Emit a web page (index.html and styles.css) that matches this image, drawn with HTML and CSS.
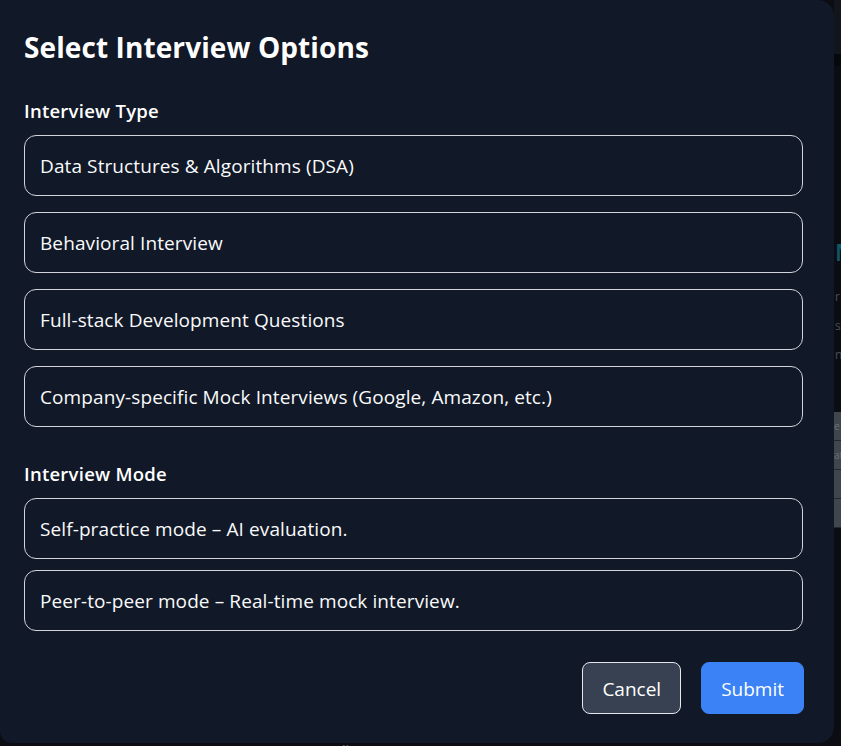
FILE: index.html
```html
<!DOCTYPE html>
<html lang="en">
<head>
<meta charset="utf-8">
<title>Select Interview Options</title>
<link rel="stylesheet" href="styles.css">
</head>
<body>
<div class="page">
  <div class="page-top"></div>
  <div class="page-body">
    <div class="page-heading">Mock</div>
    <p class="page-line">r</p>
    <p class="page-line">s</p>
    <p class="page-line">nc</p>
    <div class="page-table">
      <div class="page-row">e</div>
      <div class="page-row">ato</div>
      <div class="page-row"></div>
      <div class="page-row"></div>
    </div>
  </div>
  <div class="page-foot">View all interview options</div>
</div>

<div class="overlay">
  <div class="modal">
    <h2 class="modal-title">Select Interview Options</h2>

    <section class="group group-type">
      <h3 class="group-label">Interview Type</h3>
      <div class="options options-type">
        <button class="option">Data Structures &amp; Algorithms (DSA)</button>
        <button class="option">Behavioral Interview</button>
        <button class="option">Full-stack Development Questions</button>
        <button class="option">Company-specific Mock Interviews (Google, Amazon, etc.)</button>
      </div>
    </section>

    <section class="group group-mode">
      <h3 class="group-label">Interview Mode</h3>
      <div class="options options-mode">
        <button class="option">Self-practice mode – AI evaluation.</button>
        <button class="option">Peer-to-peer mode – Real-time mock interview.</button>
      </div>
    </section>

    <div class="actions">
      <button class="btn btn-cancel">Cancel</button>
      <button class="btn btn-submit">Submit</button>
    </div>
  </div>
</div>
</body>
</html>
```

FILE: styles.css
```css
* { box-sizing: border-box; }

html, body {
  margin: 0;
  padding: 0;
  height: 100%;
}

body {
  background: #0b0d12;
  font-family: "Open Sans", "Noto Sans", sans-serif;
  color: #f3f4f6;
  overflow: hidden;
}

/* page behind the modal (only a sliver shows) */
.page {
  display: flex;
  flex-direction: column;
  height: 746px;
  padding-left: 834px;
  color: #4b5563;
}
.page-top {
  height: 66px;
  background: #12151b;
  border-bottom: 12px solid #07080b;
}
.page-body {
  flex: 1;
  padding-top: 172px;
  padding-left: 1px;
}
.page-heading {
  font-size: 24px;
  font-weight: 600;
  color: #0e5968;
  line-height: 28px;
  white-space: nowrap;
}
.page-line {
  margin: 0;
  font-size: 12px;
  line-height: 29px;
  color: #4a4f57;
  white-space: nowrap;
}
.page-line:first-of-type { margin-top: 16px; }
.page-table {
  margin-top: 43px;
  margin-left: -1px;
  background: #41454c;
}
.page-row {
  height: 29px;
  border-bottom: 1px solid #24272c;
  font-size: 10px;
  color: #6b7078;
  line-height: 28px;
  white-space: nowrap;
}
.page-foot {
  position: absolute;
  left: 300px;
  top: 741px;
  font-size: 14px;
  color: #6b7280;
}

/* modal */
.overlay {
  position: fixed;
  inset: 0;
}
.modal {
  position: absolute;
  left: 0;
  top: 0;
  width: 834px;
  height: 743px;
  background: #111827;
  border-radius: 0 16px 16px 12px;
  padding: 29px 31px 29px 24px;
  display: flex;
  flex-direction: column;
}

.modal-title {
  margin: 0 0 32px;
  font-size: 28px;
  line-height: 36px;
  font-weight: 700;
  letter-spacing: 0.1px;
  color: #ffffff;
}

.group-label {
  margin: 0 0 10px;
  font-size: 18.5px;
  line-height: 28px;
  font-weight: 600;
  letter-spacing: 0.25px;
  color: #ffffff;
}

.group-mode { margin-top: 33px; }

.options {
  display: flex;
  flex-direction: column;
}
.options-type { gap: 16px; }
.options-mode { gap: 11px; }

.option {
  display: block;
  width: 100%;
  text-align: left;
  background: #111827;
  color: #f9fafb;
  border: 1px solid #d1d5db;
  border-radius: 12px;
  padding: 17px 15px 15px;
  font-family: inherit;
  font-size: 19px;
  line-height: 27px;
  letter-spacing: 0.1px;
  cursor: pointer;
}

.actions {
  margin-top: 31px;
  margin-right: -1px;
  display: flex;
  justify-content: flex-end;
  gap: 20px;
}

.btn {
  height: 52px;
  padding: 2px 19px 0;
  border-radius: 8px;
  font-family: inherit;
  font-size: 19px;
  color: #ffffff;
  cursor: pointer;
}
.btn-cancel {
  background: #374151;
  border: 1px solid #e5e7eb;
}
.btn-submit {
  background: #3b82f6;
  border: 1px solid #3b82f6;
}
```
